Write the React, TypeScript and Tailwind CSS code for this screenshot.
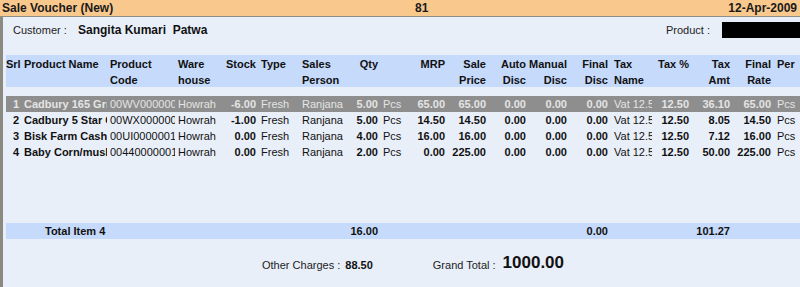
const cols = 'grid grid-cols-[18px_86px_68px_46px_34px_44px_48px_30px_25px_42px_41px_40px_41px_41px_44px_37px_41px_41px_27px]';

const rows = [
  ['1', 'Cadbury 165 Grm', '00WV0000001', 'Howrah', '-6.00', 'Fresh', 'Ranjana', '5.00', 'Pcs', '65.00', '65.00', '0.00', '0.00', '0.00', 'Vat 12.5', '12.50', '36.10', '65.00', 'Pcs'],
  ['2', 'Cadbury 5 Star Choco', '00WX0000001', 'Howrah', '-1.00', 'Fresh', 'Ranjana', '5.00', 'Pcs', '14.50', '14.50', '0.00', '0.00', '0.00', 'Vat 12.5', '12.50', '8.05', '14.50', 'Pcs'],
  ['3', 'Bisk Farm Cashew', '00UI0000001', 'Howrah', '0.00', 'Fresh', 'Ranjana', '4.00', 'Pcs', '16.00', '16.00', '0.00', '0.00', '0.00', 'Vat 12.5', '12.50', '7.12', '16.00', 'Pcs'],
  ['4', 'Baby Corn/mushroom', '00440000001', 'Howrah', '0.00', 'Fresh', 'Ranjana', '2.00', 'Pcs', '0.00', '225.00', '0.00', '0.00', '0.00', 'Vat 12.5', '12.50', '50.00', '225.00', 'Pcs'],
];

// alignment / weight per column
const right = [4, 7, 9, 10, 11, 12, 13, 15, 16, 17];
const bold = [0, 1, 4, 7, 9, 10, 11, 12, 13, 15, 16, 17];

function cellClass(i: number) {
  const base = 'overflow-hidden whitespace-nowrap';
  if (i === 0) return base + ' pl-[7px]';
  if (i === 1 || i === 2) return base + ' mr-[3px]';
  if (i === 14) return base + ' pl-[4px] mr-[2px]';
  if (right.includes(i)) return base + ' text-right pr-[2px]';
  if (i === 18) return base + ' pl-[4px]';
  if (i === 5 || i === 8) return base + ' pl-[3px]';
  return base;
}

export default function App() {
  return (
    <div className="w-[800px] h-[287px] overflow-hidden bg-[#e9eff9] text-[11px] leading-[16px] text-[#111] font-['Liberation_Sans',Arial,sans-serif]">
      {/* title bar */}
      <div className="h-[17px] bg-[#f9c88d] border-b border-[#8f8f86] flex items-center font-bold text-[12px] text-[#1a1a1a]">
        <span className="pl-[2px] w-[415px]">Sale Voucher (New)</span>
        <span className="flex-1">81</span>
        <span className="pr-[3px]">12-Apr-2009</span>
      </div>

      <div className="flex h-[270px]">
        <div className="w-[3px] bg-[#8a8a80]" />
        <div className="flex-1 pl-[3px] flex flex-col">
          {/* customer line */}
          <div className="h-[38px] flex items-start pt-[5px]">
            <span className="pl-[7px] w-[72px] text-[#222]">Customer :</span>
            <span className="font-bold text-[12px]">Sangita Kumari&nbsp;&nbsp;Patwa</span>
            <span className="ml-auto mr-[12px] text-[#222]">Product :</span>
            <div className="w-[78px] h-[16px] bg-black" />
          </div>

          {/* header */}
          <div className={cols + ' bg-[#c6dafb] h-[32px] font-bold pt-[1px]'}>
            <span>Srl</span>
            <span>Product Name</span>
            <span>Product<br />Code</span>
            <span>Ware<br />house</span>
            <span className="text-right pr-[2px]">Stock</span>
            <span className="pl-[3px]">Type</span>
            <span>Sales<br />Person</span>
            <span className="text-right pr-[2px]">Qty</span>
            <span />
            <span className="text-right pr-[2px]">MRP</span>
            <span className="text-right pr-[2px]">Sale<br />Price</span>
            <span className="text-right pr-[2px]">Auto<br />Disc</span>
            <span className="text-right pr-[2px]">Manual<br />Disc</span>
            <span className="text-right pr-[2px]">Final<br />Disc</span>
            <span className="pl-[4px]">Tax<br />Name</span>
            <span className="text-right pr-[2px]">Tax %</span>
            <span className="text-right pr-[2px]">Tax<br />Amt</span>
            <span className="text-right pr-[2px]">Final<br />Rate</span>
            <span className="pl-[4px]">Per</span>
          </div>

          {/* rows */}
          <div className="mt-[9px] h-[127px]">
            {rows.map((r, ri) => (
              <div
                key={ri}
                className={cols + ' h-[16px] ' + (ri === 0 ? 'bg-[#8e8e8e] text-[#e4e4e4]' : '')}
              >
                {r.map((c, i) => (
                  <span key={i} className={cellClass(i) + (bold.includes(i) ? ' font-bold' : '')}>
                    {c}
                  </span>
                ))}
              </div>
            ))}
          </div>

          {/* total */}
          <div className={cols + ' bg-[#c6dafb] h-[16px] font-bold'}>
            <span />
            <span className="col-span-2 pl-[21px]">Total Item 4</span>
            <span className="col-start-8 text-right pr-[2px]">16.00</span>
            <span className="col-start-14 text-right pr-[2px]">0.00</span>
            <span className="col-start-17 text-right pr-[2px]">101.27</span>
          </div>

          {/* footer */}
          <div className="flex items-end h-[40px] pb-[6px]">
            <span className="ml-[256px] text-[#222]">Other Charges :</span>
            <span className="ml-[5px] font-bold">88.50</span>
            <span className="ml-[60px] text-[#222]">Grand Total :</span>
            <span className="ml-[7px] font-bold text-[17px] leading-[20px]">1000.00</span>
          </div>
        </div>
      </div>
    </div>
  );
}
